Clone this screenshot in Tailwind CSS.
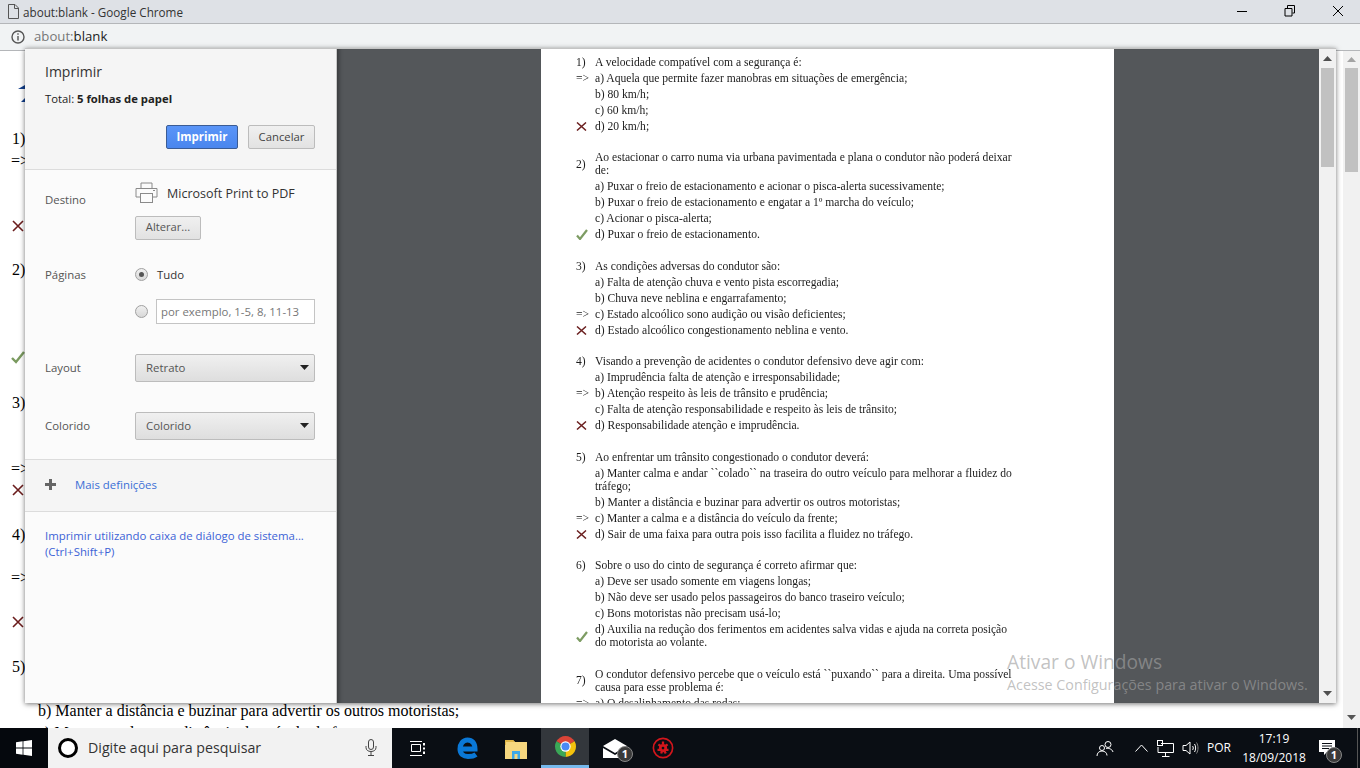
<!DOCTYPE html>
<html lang="pt">
<head>
    <meta charset="UTF-8">
    <title>about:blank - Google Chrome</title>
    <script src="https://cdn.jsdelivr.net/npm/@tailwindcss/browser@4"></script>
</head>
<body class="bg-white">
<div class="relative flex h-[768px] w-[1360px] flex-col overflow-hidden font-['Open_Sans',sans-serif]">

    <!-- title bar -->
    <header class="flex h-6 shrink-0 items-center border-b border-[#b4b6b9] bg-[#dee1e6]">
        <svg class="ml-[7px] h-[15px] w-[12px]" viewBox="0 0 12 15" fill="none" stroke="#555"><path d="M1.5 .5H8L11.5 4V14.5H1.5ZM7.5 .5V4.5H11.5"/></svg>
        <span class="ml-[4px] mt-[2px] text-[11.7px] text-[#333]">about:blank - Google Chrome</span>
        <div class="ml-auto mb-[2px] flex items-center">
            <svg class="mr-[36px] h-3 w-3" viewBox="0 0 12 12" stroke="#000"><path d="M1 6.5H11"/></svg>
            <svg class="mr-[36px] h-3 w-3" viewBox="0 0 12 12" fill="none" stroke="#000"><path d="M3.5 3V.5H10.5V8H8.5M1 3.5H8V11H1Z"/></svg>
            <svg class="mr-[16px] h-3 w-3" viewBox="0 0 12 12" stroke="#000"><path d="M1 1L11 11M11 1L1 11"/></svg>
        </div>
    </header>

    <!-- address bar -->
    <div class="flex h-[27px] shrink-0 items-center border-b border-[#b4b6b9] bg-[#f1f3f4]">
        <svg class="ml-[11px] h-[14px] w-[14px]" viewBox="0 0 14 14" fill="none" stroke="#555" stroke-width="1.4"><circle cx="7" cy="7" r="6"/><path d="M7 6V10.5M7 3.2V4.8"/></svg>
        <span class="ml-[9px] text-[13.2px] text-[#777]">about:<span class="text-[#222]">blank</span></span>
    </div>

    <!-- page behind the dialog -->
    <div class="relative flex min-h-0 flex-1 bg-white">
        <div class="flex-1 overflow-hidden pl-[11px] pt-[77px] font-['Liberation_Serif',serif] text-base leading-[22px] text-black">
            <svg class="absolute left-[18px] top-[34px] h-[18px] w-[8px]" viewBox="0 0 8 18" fill="#123f8c"><path d="M0 4L7 0V4ZM3 17L7 13V17Z"/></svg>
            <p class="ml-[1px]">1)</p>
            <p>=&gt;</p>
            <svg class="ml-[1px] mt-[48px] h-3 w-3" viewBox="0 0 12 12" stroke="#6b1d1d" stroke-width="1.6"><path d="M1 1L11 11M11 1L1 11"/></svg>
            <p class="ml-[1px] mt-[27px]">2)</p>
            <svg class="mt-[69px] h-[14px] w-[14px]" viewBox="0 0 14 14" fill="none" stroke="#7a9a5f" stroke-width="2.4"><path d="M1 8L5 12L13 2"/></svg>
            <p class="ml-[1px] mt-[28px]">3)</p>
            <p class="mt-[44px]">=&gt;</p>
            <svg class="ml-[1px] mt-[4px] h-3 w-3" viewBox="0 0 12 12" stroke="#6b1d1d" stroke-width="1.6"><path d="M1 1L11 11M11 1L1 11"/></svg>
            <p class="ml-[1px] mt-[28px]">4)</p>
            <p class="mt-[21px]">=&gt;</p>
            <svg class="ml-[1px] mt-[27px] h-3 w-3" viewBox="0 0 12 12" stroke="#6b1d1d" stroke-width="1.6"><path d="M1 1L11 11M11 1L1 11"/></svg>
            <p class="ml-[1px] mt-[28px]">5)</p>
            <p class="ml-[27px] mt-[22px]">b) Manter a distância e buzinar para advertir os outros motoristas;</p>
            <p class="ml-[27px]">c) Manter a calma e a distância do veículo da frente;</p>
        </div>
        <!-- page scrollbar -->
        <div class="flex w-[17px] shrink-0 flex-col items-center bg-[#f1f1f1]">
            <svg class="mt-[6px] h-[5px] w-[9px]" viewBox="0 0 9 5" fill="#a3a3a3"><path d="M4.5 0L9 5H0Z"/></svg>
            <div class="mt-[6px] h-[104px] w-[13px] bg-[#c1c1c1]"></div>
            <svg class="mb-[8px] mt-auto h-[5px] w-[9px]" viewBox="0 0 9 5" fill="#555"><path d="M4.5 5L9 0H0Z"/></svg>
        </div>
    </div>

    <!-- taskbar -->
    <footer class="flex h-10 shrink-0 items-center bg-[#0a0e14] text-white">
        <div class="flex h-full w-12 items-center justify-center bg-[#05080d]">
            <svg class="h-4 w-4" viewBox="0 0 16 16" fill="#fff"><path d="M0 2.2L6.6 1.3V7.5H0ZM7.4 1.2L16 0V7.5H7.4ZM0 8.4H6.6V14.7L0 13.8ZM7.4 8.4H16V16L7.4 14.8Z"/></svg>
        </div>
        <div class="flex h-full w-[344px] items-center bg-[#f2f2f2] pl-[10px] text-[#333]">
            <div class="h-[20px] w-[20px] rounded-full border-[3px] border-black bg-white"></div>
            <span class="ml-[10px] text-[14.2px]">Digite aqui para pesquisar</span>
            <svg class="ml-auto mr-[15px] h-[18px] w-[12px]" viewBox="0 0 12 18" fill="none" stroke="#444"><rect x="3.5" y=".5" width="5" height="10" rx="2.5"/><path d="M1 7V8.5C1 11 3 12.5 6 12.5C9 12.5 11 11 11 8.5V7M6 12.5V16.5M3 16.5H9"/></svg>
        </div>
        <div class="flex h-full w-[149px] items-center">
            <svg class="ml-[17px] h-[15px] w-[17px]" viewBox="0 0 17 15" fill="none" stroke="#fff"><path d="M1 .5H13M2.5 3.5H11.5V10.5H2.5ZM1 14.5H13"/><path d="M15 2V4.5M15 6.5V8.5M15 10.5V13" stroke-width="2"/></svg>
            <svg class="ml-[31px] h-[22px] w-[21px]" viewBox="0 0 21 22" fill="none" stroke="#0a78d7" stroke-width="5"><path d="M3 12H18C18 6 15 3 10.5 3C6 3 3 7 3 12C3 17 6.5 19.5 11 19.5C14 19.5 17 19 19 17.5"/></svg>
            <svg class="ml-[27px] h-[21px] w-[22px]" viewBox="0 0 22 21"><path d="M0 2H8L10 4H22V21H0Z" fill="#f6d77f"/><path d="M0 2H8L10 4H1V7H0Z" fill="#e0b648"/><path d="M7 21V13H15V21H12.5V16H9.5V21Z" fill="#3fa9e6"/></svg>
        </div>
        <div class="flex h-full w-[48px] items-center justify-center border-b-[3px] border-[#76b9ed] bg-[#33373c]">
            <svg class="h-[23px] w-[23px]" viewBox="0 0 24 24"><path d="M12 12L2.5 6.5A11 11 0 0 1 21.5 6.5Z" fill="#db4437"/><path d="M12 12L21.5 6.5A11 11 0 0 1 12 23Z" fill="#f4c20d"/><path d="M12 12L12 23A11 11 0 0 1 2.5 6.5Z" fill="#3aa757"/><circle cx="12" cy="12" r="5.4" fill="#fff"/><circle cx="12" cy="12" r="4.2" fill="#4a8af4"/></svg>
        </div>
        <div class="relative ml-[14px] h-[19px] w-[24px]">
            <svg class="h-[19px] w-[24px]" viewBox="0 0 24 19" fill="#fff"><path d="M0 7L12 0L24 7L12 14ZM0 9L12 16L24 9V19H0Z"/></svg>
            <span class="absolute left-[14px] top-[7px] flex h-[16px] w-[16px] items-center justify-center rounded-full border border-[#888] bg-[#3a3a3a] text-[11px] font-bold leading-none">1</span>
        </div>
        <svg class="ml-[25px] h-[22px] w-[22px]" viewBox="0 0 24 24" fill="none" stroke="#d3161c" stroke-width="1.8"><circle cx="12" cy="12" r="10.5"/><circle cx="12" cy="12" r="3" stroke-width="3"/><path d="M12 5V8M7 8L9.5 10M17 8L14.5 10M6 14H9M18 14H15M10 18L11 15M15 18L13.5 15" stroke-width="2.5"/></svg>

        <div class="ml-auto flex h-full items-center">
            <svg class="h-[17px] w-[18px]" viewBox="0 0 18 17" fill="none" stroke="#fff"><circle cx="12" cy="4.5" r="3"/><circle cx="6" cy="8" r="2.5"/><path d="M1 16C1 13 3 11 6 11C9 11 11 13 11 15.5M10 8.5C12 8 16 8.5 17 12"/></svg>
            <svg class="ml-[21px] h-[8px] w-[13px]" viewBox="0 0 13 8" fill="none" stroke="#fff"><path d="M.5 7.5L6.5 1L12.5 7.5"/></svg>
            <svg class="ml-[9px] h-[17px] w-[17px]" viewBox="0 0 17 17" fill="none" stroke="#fff"><path d="M4 3.5H16.5V12.5H1V7M8.5 12.5V16M5 16.5H12.5"/><rect x=".5" y=".5" width="5" height="5"/></svg>
            <svg class="ml-[8px] h-[16px] w-[17px]" viewBox="0 0 17 16" fill="none" stroke="#fff"><path d="M1 5.5H4L8 2V14L4 10.5H1Z"/><path d="M10.5 6C11.5 7 11.5 9 10.5 10M12.5 4C14 6 14 10 12.5 12" /><path d="M14.5 2.5C16.5 5.5 16.5 10.5 14.5 13.5" stroke="#888"/></svg>
            <span class="ml-[8px] text-[12px]">POR</span>
            <div class="ml-[13px] flex w-[60px] flex-col items-center text-[12px] leading-[19px]">
                <span>17:19</span>
                <span class="whitespace-nowrap">18/09/2018</span>
            </div>
            <div class="relative ml-[15px] h-[17px] w-[16px]">
                <svg class="h-[17px] w-[16px]" viewBox="0 0 16 17"><path d="M0 0H16V12H8L5 15V12H0Z" fill="#fff"/><path d="M3 3.5H13M3 6H13M3 8.5H10" stroke="#0a0e14"/></svg>
                <span class="absolute left-[7px] top-[7px] flex h-[16px] w-[16px] items-center justify-center rounded-full border border-[#888] bg-[#3a3a3a] text-[11px] font-bold leading-none">1</span>
            </div>
            <div class="ml-[22px] mr-[2px] h-full w-px bg-[#555]"></div>
        </div>
    </footer>

    <!-- print dialog -->
    <div class="absolute left-[25px] top-[48px] flex h-[655px] w-[1311px] border-t border-[#c4c4c4] bg-[#fbfbfb] shadow-[0_1px_5px_rgba(0,0,0,.55)]">
        <aside class="flex w-[311px] shrink-0 flex-col text-[11.4px] text-[#555]">
            <section class="h-[121px] border-b border-[#dcdcdc] bg-[#f5f5f5] px-5 pt-[13px]">
                <h1 class="text-[14px] leading-5 text-[#333]">Imprimir</h1>
                <p class="mt-[9px] text-[11.3px] leading-4 text-[#222]">Total: <b>5 folhas de papel</b></p>
                <div class="mt-[18px] flex justify-end gap-[10px] pr-[1px]">
                    <button class="h-6 w-[72px] rounded-[2px] border border-[#3b5c94] bg-linear-to-b from-[#5a95f8] to-[#4a86ee] text-[11.5px] font-bold text-white">Imprimir</button>
                    <button class="h-6 w-[67px] rounded-[2px] border border-[#bcbcbc] bg-linear-to-b from-[#f0f0f0] to-[#e2e2e2] text-[11.3px] text-[#444]">Cancelar</button>
                </div>
            </section>
            <section class="flex h-[290px] flex-col border-b border-[#dcdcdc] pl-5 pr-[21px]">
                <div class="flex pt-[12px]">
                    <span class="mt-[9px] w-[90px] shrink-0">Destino</span>
                    <div>
                        <div class="flex items-center">
                            <svg class="h-[21px] w-[23px]" viewBox="0 0 23 21" fill="none" stroke="#8a8a8a"><path d="M6 6V1H17V6M5 15H1V6.5H22V15H18"/><rect x="5.5" y="11.5" width="12" height="9"/><path d="M18 8.5H20" /></svg>
                            <span class="ml-[9px] mt-[3px] text-[12.5px] text-[#333]">Microsoft Print to PDF</span>
                        </div>
                        <button class="mt-[12px] h-6 w-[66px] rounded-[2px] border border-[#bcbcbc] bg-linear-to-b from-[#f0f0f0] to-[#e2e2e2] text-[11.2px] text-[#555]">Alterar...</button>
                    </div>
                </div>
                <div class="mt-[27px] flex">
                    <span class="w-[90px] shrink-0 leading-4">Páginas</span>
                    <div class="flex-1">
                        <label class="mt-[1px] flex h-[14px] items-center">
                            <span class="flex h-[13px] w-[13px] items-center justify-center rounded-full border border-[#a0a0a0] bg-linear-to-b from-[#f0f0f0] to-[#d8d8d8]"><span class="h-[5px] w-[5px] rounded-full bg-[#555]"></span></span>
                            <span class="ml-[9px] text-[#333]">Tudo</span>
                        </label>
                        <div class="mt-[17px] flex items-center">
                            <span class="h-[13px] w-[13px] rounded-full border border-[#a0a0a0] bg-linear-to-b from-[#f0f0f0] to-[#d8d8d8]"></span>
                            <span class="ml-[8px] flex h-[25px] flex-1 items-center border border-[#c4c4c4] bg-white pl-[4px] text-[11.4px] text-[#777]">por exemplo, 1-5, 8, 11-13</span>
                        </div>
                    </div>
                </div>
                <div class="mt-[30px] flex items-center">
                    <span class="w-[90px] shrink-0">Layout</span>
                    <div class="flex h-[28px] flex-1 items-center justify-between rounded-[2px] border border-[#bcbcbc] bg-linear-to-b from-[#f0f0f0] to-[#dedede] pl-[10px] pr-[5px]">
                        <span class="text-[#555]">Retrato</span>
                        <svg class="h-[5px] w-[9px]" viewBox="0 0 9 5" fill="#222"><path d="M0 0H9L4.5 5Z"/></svg>
                    </div>
                </div>
                <div class="mt-[30px] flex items-center">
                    <span class="w-[90px] shrink-0">Colorido</span>
                    <div class="flex h-[28px] flex-1 items-center justify-between rounded-[2px] border border-[#bcbcbc] bg-linear-to-b from-[#f0f0f0] to-[#dedede] pl-[10px] pr-[5px]">
                        <span class="text-[#555]">Colorido</span>
                        <svg class="h-[5px] w-[9px]" viewBox="0 0 9 5" fill="#222"><path d="M0 0H9L4.5 5Z"/></svg>
                    </div>
                </div>
            </section>
            <section class="flex h-[52px] items-center border-b border-[#dcdcdc] bg-[#f5f5f5] pb-[2px] pl-5">
                <svg class="h-[11px] w-[11px]" viewBox="0 0 11 11" fill="#666"><path d="M4 0H7V4H11V7H7V11H4V7H0V4H4Z"/></svg>
                <a class="ml-[19px] text-[#3b6fd6]">Mais definições</a>
            </section>
            <a class="pl-5 pt-[16px] leading-4 text-[#3b62d6]">Imprimir utilizando caixa de diálogo de sistema...<br>(Ctrl+Shift+P)</a>
        </aside>

        <!-- preview -->
        <main class="flex-1 overflow-hidden border-l border-[#c8c8c8] bg-[#54575a] pl-[204px] shadow-[inset_6px_0_4px_-4px_rgba(0,0,0,.35)]">
            <article class="h-full w-[573px] overflow-hidden bg-white pl-[35px] pt-[5px] font-['Liberation_Serif',serif] text-[11.6px] text-[#1c1c1c] blur-[0.3px]">
                <div class="mb-[15.5px]">
                    <div class="flex items-center py-[1.5px] leading-[13px]"><span class="w-[19px] shrink-0">1)</span><p class="w-[420px]">A velocidade compatível com a segurança é:</p></div>
                    <div class="flex items-center py-[1.5px] leading-[13px]"><span class="w-[19px] shrink-0">=&gt;</span><p class="w-[420px]">a) Aquela que permite fazer manobras em situações de emergência;</p></div>
                    <div class="flex items-center py-[1.5px] leading-[13px]"><span class="w-[19px] shrink-0"></span><p class="w-[420px]">b) 80 km/h;</p></div>
                    <div class="flex items-center py-[1.5px] leading-[13px]"><span class="w-[19px] shrink-0"></span><p class="w-[420px]">c) 60 km/h;</p></div>
                    <div class="flex items-center py-[1.5px] leading-[13px]"><span class="w-[19px] shrink-0"><svg class="h-[9px] w-[11px]" viewBox="0 0 11 9" stroke="#6b2020" stroke-width="1.5"><path d="M1 .5L10 8.5M10 .5L1 8.5"/></svg></span><p class="w-[420px]">d) 20 km/h;</p></div>
                </div>
                <div class="mb-[15.5px]">
                    <div class="flex items-center py-[1.5px] leading-[13px]"><span class="w-[19px] shrink-0">2)</span><p class="w-[420px]">Ao estacionar o carro numa via urbana pavimentada e plana o condutor não poderá deixar de:</p></div>
                    <div class="flex items-center py-[1.5px] leading-[13px]"><span class="w-[19px] shrink-0"></span><p class="w-[420px]">a) Puxar o freio de estacionamento e acionar o pisca-alerta sucessivamente;</p></div>
                    <div class="flex items-center py-[1.5px] leading-[13px]"><span class="w-[19px] shrink-0"></span><p class="w-[420px]">b) Puxar o freio de estacionamento e engatar a 1º marcha do veículo;</p></div>
                    <div class="flex items-center py-[1.5px] leading-[13px]"><span class="w-[19px] shrink-0"></span><p class="w-[420px]">c) Acionar o pisca-alerta;</p></div>
                    <div class="flex items-center py-[1.5px] leading-[13px]"><span class="w-[19px] shrink-0"><svg class="h-[11px] w-[12px]" viewBox="0 0 12 11" fill="none" stroke="#7d9c63" stroke-width="2.2"><path d="M1 6.5L4 10L11 1"/></svg></span><p class="w-[420px]">d) Puxar o freio de estacionamento.</p></div>
                </div>
                <div class="mb-[15.5px]">
                    <div class="flex items-center py-[1.5px] leading-[13px]"><span class="w-[19px] shrink-0">3)</span><p class="w-[420px]">As condições adversas do condutor são:</p></div>
                    <div class="flex items-center py-[1.5px] leading-[13px]"><span class="w-[19px] shrink-0"></span><p class="w-[420px]">a) Falta de atenção chuva e vento pista escorregadia;</p></div>
                    <div class="flex items-center py-[1.5px] leading-[13px]"><span class="w-[19px] shrink-0"></span><p class="w-[420px]">b) Chuva neve neblina e engarrafamento;</p></div>
                    <div class="flex items-center py-[1.5px] leading-[13px]"><span class="w-[19px] shrink-0">=&gt;</span><p class="w-[420px]">c) Estado alcoólico sono audição ou visão deficientes;</p></div>
                    <div class="flex items-center py-[1.5px] leading-[13px]"><span class="w-[19px] shrink-0"><svg class="h-[9px] w-[11px]" viewBox="0 0 11 9" stroke="#6b2020" stroke-width="1.5"><path d="M1 .5L10 8.5M10 .5L1 8.5"/></svg></span><p class="w-[420px]">d) Estado alcoólico congestionamento neblina e vento.</p></div>
                </div>
                <div class="mb-[15.5px]">
                    <div class="flex items-center py-[1.5px] leading-[13px]"><span class="w-[19px] shrink-0">4)</span><p class="w-[420px]">Visando a prevenção de acidentes o condutor defensivo deve agir com:</p></div>
                    <div class="flex items-center py-[1.5px] leading-[13px]"><span class="w-[19px] shrink-0"></span><p class="w-[420px]">a) Imprudência falta de atenção e irresponsabilidade;</p></div>
                    <div class="flex items-center py-[1.5px] leading-[13px]"><span class="w-[19px] shrink-0">=&gt;</span><p class="w-[420px]">b) Atenção respeito às leis de trânsito e prudência;</p></div>
                    <div class="flex items-center py-[1.5px] leading-[13px]"><span class="w-[19px] shrink-0"></span><p class="w-[420px]">c) Falta de atenção responsabilidade e respeito às leis de trânsito;</p></div>
                    <div class="flex items-center py-[1.5px] leading-[13px]"><span class="w-[19px] shrink-0"><svg class="h-[9px] w-[11px]" viewBox="0 0 11 9" stroke="#6b2020" stroke-width="1.5"><path d="M1 .5L10 8.5M10 .5L1 8.5"/></svg></span><p class="w-[420px]">d) Responsabilidade atenção e imprudência.</p></div>
                </div>
                <div class="mb-[15.5px]">
                    <div class="flex items-center py-[1.5px] leading-[13px]"><span class="w-[19px] shrink-0">5)</span><p class="w-[420px]">Ao enfrentar um trânsito congestionado o condutor deverá:</p></div>
                    <div class="flex items-center py-[1.5px] leading-[13px]"><span class="w-[19px] shrink-0"></span><p class="w-[420px]">a) Manter calma e andar ``colado`` na traseira do outro veículo para melhorar a fluidez do tráfego;</p></div>
                    <div class="flex items-center py-[1.5px] leading-[13px]"><span class="w-[19px] shrink-0"></span><p class="w-[420px]">b) Manter a distância e buzinar para advertir os outros motoristas;</p></div>
                    <div class="flex items-center py-[1.5px] leading-[13px]"><span class="w-[19px] shrink-0">=&gt;</span><p class="w-[420px]">c) Manter a calma e a distância do veículo da frente;</p></div>
                    <div class="flex items-center py-[1.5px] leading-[13px]"><span class="w-[19px] shrink-0"><svg class="h-[9px] w-[11px]" viewBox="0 0 11 9" stroke="#6b2020" stroke-width="1.5"><path d="M1 .5L10 8.5M10 .5L1 8.5"/></svg></span><p class="w-[420px]">d) Sair de uma faixa para outra pois isso facilita a fluidez no tráfego.</p></div>
                </div>
                <div class="mb-[15.5px]">
                    <div class="flex items-center py-[1.5px] leading-[13px]"><span class="w-[19px] shrink-0">6)</span><p class="w-[420px]">Sobre o uso do cinto de segurança é correto afirmar que:</p></div>
                    <div class="flex items-center py-[1.5px] leading-[13px]"><span class="w-[19px] shrink-0"></span><p class="w-[420px]">a) Deve ser usado somente em viagens longas;</p></div>
                    <div class="flex items-center py-[1.5px] leading-[13px]"><span class="w-[19px] shrink-0"></span><p class="w-[420px]">b) Não deve ser usado pelos passageiros do banco traseiro veículo;</p></div>
                    <div class="flex items-center py-[1.5px] leading-[13px]"><span class="w-[19px] shrink-0"></span><p class="w-[420px]">c) Bons motoristas não precisam usá-lo;</p></div>
                    <div class="flex items-center py-[1.5px] leading-[13px]"><span class="w-[19px] shrink-0"><svg class="h-[11px] w-[12px]" viewBox="0 0 12 11" fill="none" stroke="#7d9c63" stroke-width="2.2"><path d="M1 6.5L4 10L11 1"/></svg></span><p class="w-[420px]">d) Auxilia na redução dos ferimentos em acidentes salva vidas e ajuda na correta posição do motorista ao volante.</p></div>
                </div>
                <div>
                    <div class="flex items-center py-[1.5px] leading-[13px]"><span class="w-[19px] shrink-0">7)</span><p class="w-[420px]">O condutor defensivo percebe que o veículo está ``puxando`` para a direita. Uma possível causa para esse problema é:</p></div>
                    <div class="flex items-center py-[1.5px] leading-[13px]"><span class="w-[19px] shrink-0">=&gt;</span><p class="w-[420px]">a) O desalinhamento das rodas;</p></div>
                </div>
            </article>
        </main>

        <!-- preview scrollbar -->
        <div class="flex w-[17px] shrink-0 flex-col items-center bg-[#f1f1f1]">
            <svg class="mt-[7px] h-[5px] w-[9px]" viewBox="0 0 9 5" fill="#505050"><path d="M4.5 0L9 5H0Z"/></svg>
            <div class="mt-[7px] h-[99px] w-[13px] bg-[#c1c1c1]"></div>
            <svg class="mb-[7px] mt-auto h-[5px] w-[9px]" viewBox="0 0 9 5" fill="#505050"><path d="M4.5 5L9 0H0Z"/></svg>
        </div>
    </div>

    <!-- activation watermark -->
    <div class="pointer-events-none absolute left-[1007px] top-[650px] text-[rgba(160,160,160,.65)]">
        <p class="text-[19.2px] leading-6">Ativar o Windows</p>
        <p class="text-[14.3px] leading-[22px]">Acesse Configurações para ativar o Windows.</p>
    </div>
</div>
</body>
</html>
